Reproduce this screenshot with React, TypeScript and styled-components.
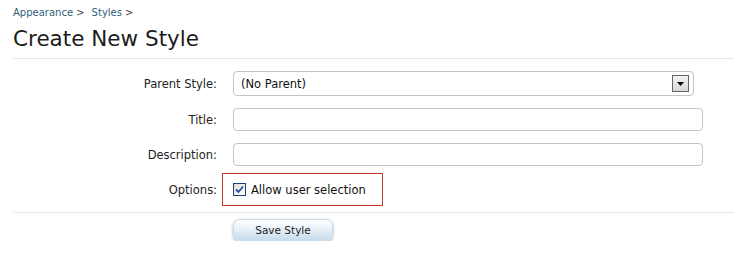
import React from "react";
import styled, { createGlobalStyle } from "styled-components";

const GlobalStyle = createGlobalStyle`
  html, body {
    margin: 0;
    padding: 0;
    background: #fff;
  }
  body {
    font-family: "DejaVu Sans", Verdana, sans-serif;
    color: #222;
  }
`;

const Page = styled.div`
  padding: 6px 11px 0 13px;
`;

const Breadcrumb = styled.div`
  display: flex;
  gap: 7px;
  font-size: 10px;
  line-height: 14px;
`;

const Crumb = styled.a`
  color: #2f5f7d;
  text-decoration: none;

  &::after {
    content: " >";
    color: #444;
  }
`;

const Heading = styled.h1`
  margin: 4px 0 0;
  font-size: 21.5px;
  font-weight: normal;
  line-height: 30px;
  color: #1c1c1c;
`;

const Divider = styled.div<{ $top: number }>`
  height: 1px;
  background: #dce9f0;
  margin: ${(p) => p.$top}px 0 0;
`;

const Form = styled.div`
  display: flex;
  flex-direction: column;
  gap: 12px;
  padding-top: 12px;
`;

const Row = styled.div<{ $pull?: number }>`
  display: grid;
  grid-template-columns: 204px 1fr;
  column-gap: 16px;
  align-items: center;
  margin-top: ${(p) => -(p.$pull ?? 0)}px;
`;

const Label = styled.label`
  text-align: right;
  font-size: 11.5px;
  color: #222;
`;

const Field = styled.div<{ $width: number }>`
  width: ${(p) => p.$width}px;
  box-sizing: border-box;
  border: 1px solid #c4c4c4;
  border-radius: 4px;
  background: #fff;
  height: ${(p) => (p.$width < 470 ? 25 : 23)}px;
  display: flex;
  align-items: center;
  padding: 0 4px 0 7px;
  font-size: 11.5px;
  color: #111;
`;

const SelectText = styled.span`
  flex: 1;
`;

const DropButton = styled.span`
  width: 15px;
  height: 15px;
  border: 1px solid #666;
  background: linear-gradient(#f2f2f2, #d6d6d6);
  display: flex;
  align-items: center;
  justify-content: center;
`;

const OptionBox = styled.div`
  margin-left: -11px;
  width: 161px;
  height: 33px;
  box-sizing: border-box;
  border: 1px solid #c0392f;
  display: flex;
  align-items: center;
  gap: 5px;
  padding-left: 10px;
  font-size: 11.5px;
  color: #111;
`;

const Check = styled.span`
  width: 11px;
  height: 11px;
  border: 1px solid #1c3f7a;
  background: linear-gradient(135deg, #dcdcd6, #fff);
  display: flex;
  align-items: center;
  justify-content: center;
`;

const Actions = styled.div`
  padding: 6px 0 0 220px;
`;

const SaveButton = styled.button`
  width: 100px;
  height: 22px;
  border: 1px solid #c9dbe8;
  border-radius: 7px;
  background: linear-gradient(#ffffff 0%, #e8f1f8 45%, #c6dced 100%);
  box-shadow: 0 1px 3px rgba(0, 0, 0, 0.35);
  font-family: "DejaVu Sans", Verdana, sans-serif;
  font-size: 10.5px;
  color: #222;
  padding: 0;
`;

export default function App() {
  return (
    <>
      <GlobalStyle />
      <Page>
        <Breadcrumb>
          <Crumb href="#">Appearance</Crumb>
          <Crumb href="#">Styles</Crumb>
        </Breadcrumb>
        <Heading>Create New Style</Heading>
        <Divider $top={4} />
        <Form>
          <Row>
            <Label>Parent Style:</Label>
            <Field $width={461}>
              <SelectText>(No Parent)</SelectText>
              <DropButton>
                <svg width="7" height="4" viewBox="0 0 7 4">
                  <path d="M0 0H7L3.5 4Z" fill="#000" />
                </svg>
              </DropButton>
            </Field>
          </Row>
          <Row>
            <Label>Title:</Label>
            <Field $width={470} />
          </Row>
          <Row>
            <Label>Description:</Label>
            <Field $width={470} />
          </Row>
          <Row $pull={5}>
            <Label>Options:</Label>
            <OptionBox>
              <Check>
                <svg width="9" height="9" viewBox="0 0 9 9">
                  <path d="M1 4.5L3.5 7L8 1.5" stroke="#2a4ea8" strokeWidth="1.8" fill="none" />
                </svg>
              </Check>
              Allow user selection
            </OptionBox>
          </Row>
        </Form>
        <Divider $top={6} />
        <Actions>
          <SaveButton>Save Style</SaveButton>
        </Actions>
      </Page>
    </>
  );
}
